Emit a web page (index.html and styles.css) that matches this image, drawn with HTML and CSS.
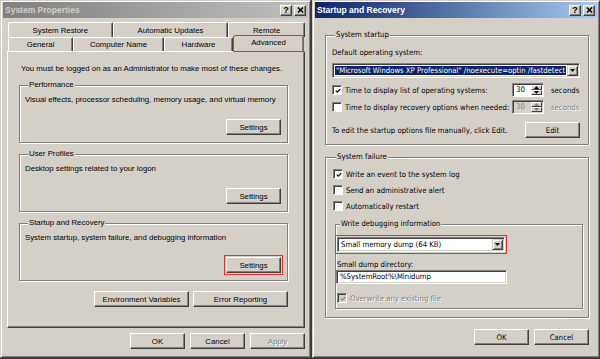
FILE: index.html
```html
<!DOCTYPE html>
<html lang="en">
  <head>
    <meta charset="UTF-8" />
    <meta name="viewport" content="width=device-width, initial-scale=1.0" />
    <title>System Properties - Startup and Recovery</title>
    <link rel="stylesheet" href="styles.css">
  </head>
  <body>
    <div class="window inactive sysprops">
      <div class="titlebar">
        <span class="title">System Properties</span>
        <span class="tbtn help">?</span>
        <span class="tbtn close">
          <svg viewBox="0 0 8 7"><path d="M1 0.5 L7 6.5 M7 0.5 L1 6.5" stroke="#000" stroke-width="1.6"/></svg>
        </span>
      </div>
      <div class="content">
        <div class="tabs">
          <div class="tabrow back">
            <div class="tab t-restore">System Restore</div>
            <div class="tab t-updates">Automatic Updates</div>
            <div class="tab t-remote">Remote</div>
          </div>
          <div class="tabrow front">
            <div class="tab t-general">General</div>
            <div class="tab t-name">Computer Name</div>
            <div class="tab t-hardware">Hardware</div>
            <div class="tab t-advanced active hl">Advanced</div>
          </div>
        </div>
        <div class="panel">
          <p class="note">You must be logged on as an Administrator to make most of these changes.</p>

          <fieldset class="group">
            <legend>Performance</legend>
            <p>Visual effects, processor scheduling, memory usage, and virtual memory</p>
            <div class="btnrow"><button class="btn">Settings</button></div>
          </fieldset>

          <fieldset class="group">
            <legend>User Profiles</legend>
            <p>Desktop settings related to your logon</p>
            <div class="btnrow"><button class="btn">Settings</button></div>
          </fieldset>

          <fieldset class="group">
            <legend>Startup and Recovery</legend>
            <p>System startup, system failure, and debugging information</p>
            <div class="btnrow"><button class="btn hl">Settings</button></div>
          </fieldset>

          <div class="btnrow extra">
            <button class="btn wide">Environment Variables</button>
            <button class="btn wide">Error Reporting</button>
          </div>
        </div>
        <div class="btnrow dialog">
          <button class="btn">OK</button>
          <button class="btn">Cancel</button>
          <button class="btn" disabled>Apply</button>
        </div>
      </div>
    </div>

    <div class="window active recovery">
      <div class="titlebar">
        <span class="title">Startup and Recovery</span>
        <span class="tbtn help">?</span>
        <span class="tbtn close">
          <svg viewBox="0 0 8 7"><path d="M1 0.5 L7 6.5 M7 0.5 L1 6.5" stroke="#000" stroke-width="1.6"/></svg>
        </span>
      </div>
      <div class="content">
        <fieldset class="group startup">
          <legend>System startup</legend>
          <div class="label">Default operating system:</div>
          <div class="select os">
            <span class="value selected">"Microsoft Windows XP Professional" /noexecute=optin /fastdetect</span>
            <span class="drop"><svg viewBox="0 0 7 4"><path d="M0 0 H7 L3.5 4 Z" fill="#000"/></svg></span>
          </div>
          <div class="row">
            <span class="check on"><svg viewBox="0 0 8 8"><path d="M1 3.5 L3 5.5 L7 1.5" fill="none" stroke="#000" stroke-width="1.7"/></svg></span>
            <span class="grow">Time to display list of operating systems:</span>
            <span class="spin">
              <span class="spinval">30</span>
              <span class="arrows">
                <span class="arrow"><svg viewBox="0 0 5 3"><path d="M0 3 H5 L2.5 0 Z" fill="#000"/></svg></span>
                <span class="arrow"><svg viewBox="0 0 5 3"><path d="M0 0 H5 L2.5 3 Z" fill="#000"/></svg></span>
              </span>
            </span>
            <span class="unit">seconds</span>
          </div>
          <div class="row">
            <span class="check"></span>
            <span class="grow">Time to display recovery options when needed:</span>
            <span class="spin disabled">
              <span class="spinval">30</span>
              <span class="arrows">
                <span class="arrow"><svg viewBox="0 0 5 3"><path d="M0 3 H5 L2.5 0 Z" fill="#808080"/></svg></span>
                <span class="arrow"><svg viewBox="0 0 5 3"><path d="M0 0 H5 L2.5 3 Z" fill="#808080"/></svg></span>
              </span>
            </span>
            <span class="unit dim">seconds</span>
          </div>
          <div class="row editrow">
            <span class="grow">To edit the startup options file manually, click Edit.</span>
            <button class="btn">Edit</button>
          </div>
        </fieldset>

        <fieldset class="group failure">
          <legend>System failure</legend>
          <div class="row opt">
            <span class="check on"><svg viewBox="0 0 8 8"><path d="M1 3.5 L3 5.5 L7 1.5" fill="none" stroke="#000" stroke-width="1.7"/></svg></span>
            <span>Write an event to the system log</span>
          </div>
          <div class="row opt">
            <span class="check"></span>
            <span>Send an administrative alert</span>
          </div>
          <div class="row opt">
            <span class="check"></span>
            <span>Automatically restart</span>
          </div>

          <fieldset class="group debug">
            <legend>Write debugging information</legend>
            <div class="select dump hl">
              <span class="value">Small memory dump (64 KB)</span>
              <span class="drop"><svg viewBox="0 0 7 4"><path d="M0 0 H7 L3.5 4 Z" fill="#000"/></svg></span>
            </div>
            <div class="label dirlabel">Small dump directory:</div>
            <div class="textbox">%SystemRoot%\Minidump</div>
            <div class="row opt overwrite">
              <span class="check on disabled"><svg viewBox="0 0 8 8"><path d="M1 3.5 L3 5.5 L7 1.5" fill="none" stroke="#808080" stroke-width="1.7"/></svg></span>
              <span class="dim">Overwrite any existing file</span>
            </div>
          </fieldset>
        </fieldset>

        <div class="btnrow dialog">
          <button class="btn">OK</button>
          <button class="btn">Cancel</button>
        </div>
      </div>
    </div>
  </body>
</html>
```

FILE: styles.css
```css
* {
  box-sizing: border-box;
}

body {
  margin: 0;
  width: 600px;
  height: 359px;
  overflow: hidden;
  background-color: #3a3a3a;
  font-family: "Liberation Sans", Arial, sans-serif;
  font-size: 7.8px;
  color: #000;
  display: flex;
  gap: 1px;
  align-items: flex-start;
}

p {
  margin: 0;
  line-height: 11px;
  white-space: nowrap;
}

/* windows */

.window {
  height: 358px;
  background-color: #d4d0c8;
  border: 1px solid;
  border-color: #d4d0c8 #404040 #404040 #d4d0c8;
  box-shadow: inset 1px 1px 0 #fff, inset -1px -1px 0 #808080;
  padding: 1px 2px 2px 2px;
  display: flex;
  flex-direction: column;
}

.sysprops {
  width: 311px;
}

.recovery {
  width: 288px;
}

.titlebar {
  height: 16px;
  display: flex;
  align-items: center;
  padding: 0 2px 0 2px;
  font-family: "Liberation Sans", Arial, sans-serif;
  font-size: 8.5px;
  font-weight: bold;
}

.inactive .titlebar {
  background: linear-gradient(to right, #808080, #c0c0c0);
  color: #d4d0c8;
}

.active .titlebar {
  background: linear-gradient(to right, #0a246a, #a6caf0);
  color: #fff;
}

.title {
  flex: 1;
}

.tbtn {
  width: 12px;
  height: 11px;
  background-color: #d4d0c8;
  border: 1px solid;
  border-color: #fff #404040 #404040 #fff;
  box-shadow: inset -1px -1px 0 #808080;
  display: flex;
  align-items: center;
  justify-content: center;
  color: #000;
  font-size: 9px;
  line-height: 9px;
}

.tbtn svg {
  width: 7px;
  height: 6px;
}

.close {
  margin-left: 2px;
}

/* buttons */

.btn {
  font: inherit;
  color: #000;
  background-color: #d4d0c8;
  border: 1px solid;
  border-color: #fff #404040 #404040 #fff;
  box-shadow: inset -1px -1px 0 #808080;
  padding: 0;
  width: 55px;
  height: 16px;
}

.btn:disabled {
  color: #808080;
  text-shadow: 1px 1px 0 #fff;
}

.btn.wide {
  width: 95px;
}

.btnrow {
  display: flex;
  justify-content: flex-end;
  gap: 5px;
}

.hl {
  outline: 1px solid #e53030;
  outline-offset: 1px;
}

/* tabs */

.sysprops .content {
  padding: 4px 3px 0 4px;
}

.tabrow {
  display: flex;
  margin-left: 1px;
}

.tab {
  height: 15px;
  display: flex;
  align-items: center;
  justify-content: center;
  border: 1px solid;
  border-bottom: none;
  border-color: #fff #404040 #404040 #fff;
  border-radius: 2px 2px 0 0;
  box-shadow: inset -1px 0 0 #808080;
  background-color: #d4d0c8;
}

.front .tab {
  height: 14px;
}

.front .tab.active {
  height: 17px;
  margin-top: -2px;
  margin-bottom: -1px;
  position: relative;
  z-index: 1;
  outline-offset: -1px;
  padding-bottom: 3px;
}

.t-restore { width: 105px; }
.t-updates { width: 116px; }
.t-remote { width: 77px; }
.t-general { width: 65px; }
.t-name { width: 91px; }
.t-hardware { width: 69px; }
.t-advanced { width: 71px; }

.panel {
  height: 277px;
  border: 1px solid;
  border-color: #fff #404040 #404040 #fff;
  box-shadow: inset -1px -1px 0 #808080;
  padding: 11px 16px 0 11px;
}

.note {
  margin-left: 2px;
}

/* group boxes */

.group {
  margin: 6px 0 0 0;
  min-width: 0;
  border: 1px solid #808080;
  box-shadow: inset 1px 1px 0 #fff, 1px 1px 0 #fff;
  padding: 4px 6px 7px 5px;
}

legend {
  margin-left: 3px;
  padding: 0 1px;
  line-height: 10px;
  background-color: #d4d0c8;
}

.group .btnrow {
  margin-top: 14px;
}

.btnrow.extra {
  margin-top: 10px;
  gap: 4px;
}

.btnrow.dialog {
  margin-top: 5px;
}

/* startup and recovery */

.recovery .content {
  padding: 12px 8px 0 10px;
  font-family: "DejaVu Sans Condensed", "Liberation Sans", sans-serif;
  font-size: 7.7px;
}

.startup {
  margin-top: 0;
  padding: 7px 8px 6px 6px;
}

.label {
  line-height: 11px;
}

.select {
  display: flex;
  height: 15px;
  background-color: #fff;
  border: 1px solid;
  border-color: #808080 #fff #fff #808080;
  box-shadow: inset 1px 1px 0 #404040, inset -1px -1px 0 #d4d0c8;
  padding: 2px 2px 2px 2px;
  overflow: hidden;
}

.select.os {
  margin-top: 5px;
}

.select .value {
  flex: 1;
  white-space: nowrap;
  overflow: hidden;
  line-height: 9px;
  padding-left: 1px;
}

.select .value.selected {
  background-color: #0a246a;
  color: #fff;
}

.drop {
  width: 11px;
  height: 11px;
  flex: none;
  margin: -1px -1px 0 1px;
  background-color: #d4d0c8;
  border: 1px solid;
  border-color: #d4d0c8 #404040 #404040 #d4d0c8;
  box-shadow: inset 1px 1px 0 #fff, inset -1px -1px 0 #808080;
  display: flex;
  align-items: center;
  justify-content: center;
}

.drop svg {
  width: 5px;
  height: 3px;
}

.row {
  display: flex;
  align-items: center;
  margin-top: 5px;
  height: 14px;
}

.row + .row {
  margin-top: 3px;
}

.row.editrow {
  margin-top: 8px;
  height: 16px;
}

.grow {
  flex: 1;
  min-width: 0;
  white-space: nowrap;
}

.check {
  width: 10px;
  height: 10px;
  flex: none;
  margin-right: 3px;
  background-color: #fff;
  border: 1px solid;
  border-color: #808080 #fff #fff #808080;
  box-shadow: inset 1px 1px 0 #404040;
  display: flex;
  align-items: center;
  justify-content: center;
}

.check svg {
  width: 6px;
  height: 6px;
  margin: 1px 0 0 1px;
}

.check.disabled {
  background-color: #d4d0c8;
}

.spin {
  width: 32px;
  height: 14px;
  flex: none;
  display: flex;
  background-color: #fff;
  border: 1px solid;
  border-color: #808080 #fff #fff #808080;
  box-shadow: inset 1px 1px 0 #404040;
  padding: 1px 1px 1px 1px;
}

.spin.disabled {
  background-color: #d4d0c8;
  color: #808080;
}

.spinval {
  flex: 1;
  line-height: 10px;
  padding-left: 2px;
}

.arrows {
  width: 11px;
  display: flex;
  flex-direction: column;
}

.arrow {
  flex: 1;
  background-color: #d4d0c8;
  border: 1px solid;
  border-color: #fff #404040 #404040 #fff;
  display: flex;
  align-items: center;
  justify-content: center;
}

.arrow svg {
  width: 5px;
  height: 3px;
}

.unit {
  width: 29px;
  flex: none;
  margin-left: 7px;
  white-space: nowrap;
}

.dim {
  color: #808080;
  text-shadow: 1px 1px 0 #fff;
}

.failure {
  margin-top: 7px;
  padding: 6px 6px 8px 7px;
}

.row.opt {
  height: 12px;
  margin-top: 0;
}

.row.opt + .row.opt {
  margin-top: 4px;
}

.debug {
  margin: 7px -1px 0 2px;
  padding: 8px 6px 4px 1px;
}

.select.dump {
  width: 168px;
}

.dirlabel {
  margin-top: 7px;
}

.textbox {
  width: 171px;
  height: 14px;
  margin-left: -1px;
  background-color: #fff;
  border: 1px solid;
  border-color: #808080 #fff #fff #808080;
  box-shadow: inset 1px 1px 0 #404040, inset -1px -1px 0 #d4d0c8;
  padding: 1px 3px;
  line-height: 10px;
}

.row.opt.overwrite {
  margin-top: 8px;
}

.recovery .btnrow.dialog {
  margin-top: 11px;
}
```
